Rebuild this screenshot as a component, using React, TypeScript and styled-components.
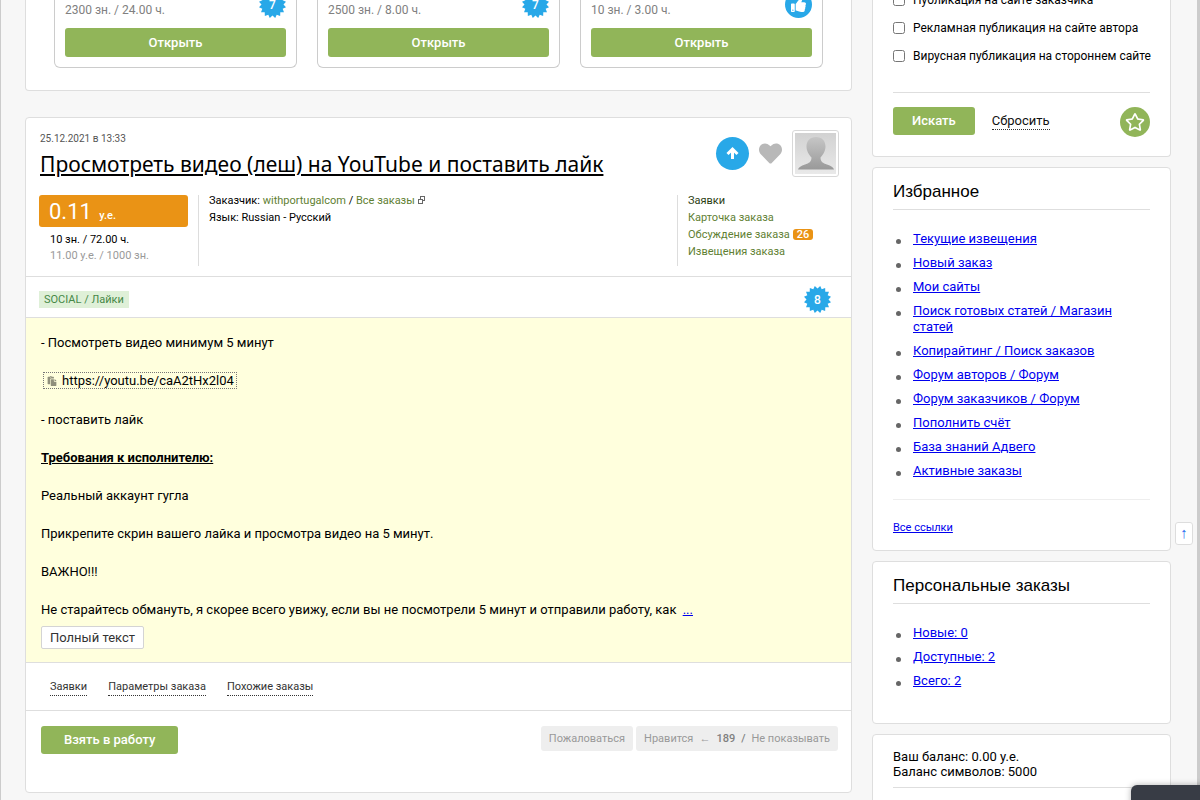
import React from "react";
import styled, { createGlobalStyle, css } from "styled-components";
import { FaHeart, FaPaste, FaRegStar, FaThumbsUp } from "react-icons/fa";

const SANS = `Roboto, "Noto Sans", sans-serif`;
const TITLE = `"Noto Sans", "Open Sans", sans-serif`;
const HEADING = `Arial, "Liberation Sans", sans-serif`;
const GREEN = "#91b559";
const BLUE = "#28a8e8";
const LINE = "#dedede";

const GlobalStyle = createGlobalStyle`
  *, *::before, *::after { box-sizing: border-box; }
  body { margin: 0; background: #f7f7f7; color: #000; font: 12px/16px ${SANS}; overflow: hidden; }
  button { font: inherit; cursor: pointer; }
  h1, h2, p, ul { margin: 0; padding: 0; }
  ul { list-style: none; }
`;

const Page = styled.div`
  display: flex;
  height: 100vh;
  overflow: hidden;
  padding: 0 26px 0 24px;
  border-left: 1px solid #ccc;
  border-right: 3px solid #ccc;
`;
const Columns = styled.div`
  flex: 1;
  min-width: 0;
  display: flex;
  align-items: flex-start;
  gap: 20px;
  margin-top: -14px;
`;
const Main = styled.main`
  flex: 1;
  min-width: 0;
  display: flex;
  flex-direction: column;
  gap: 26px;
`;
const Side = styled.aside`
  width: 299px;
  flex-shrink: 0;
  display: flex;
  flex-direction: column;
  gap: 10px;
`;
const Panel = styled.section`
  background: #fff;
  border: 1px solid ${LINE};
  border-radius: 4px;
`;

const Offers = styled(Panel)`
  display: grid;
  grid-template-columns: repeat(3, 1fr);
  gap: 20px;
  padding: 0 28px 22px;
  border-top: 0;
`;
const Offer = styled.article`
  display: flex;
  flex-direction: column;
  gap: 10px;
  padding: 0 10px 10px;
  border: 1px solid #ccc;
  border-top: 0;
  border-radius: 0 0 6px 6px;
`;
const OfferHead = styled.div`
  display: flex;
  align-items: flex-end;
  justify-content: space-between;
  height: 32px;
`;
const OfferTitle = styled.a`
  display: block;
  margin-bottom: 1px;
  color: #6a8c33;
  font-size: 13px;
  text-decoration: none;
`;
const OfferMeta = styled.div`
  color: #808080;
`;
const GreenButton = styled.button<{ $size?: "wide" | "large" }>`
  height: ${(p) => (p.$size === "wide" ? 29 : 28)}px;
  padding: 0 ${(p) => (p.$size === "large" ? 23 : 19)}px;
  border: 0;
  border-radius: 3px;
  background: ${GREEN};
  color: #fff;
  font-size: 13px;
  font-weight: 500;
  white-space: nowrap;
`;
const BadgeBox = styled.span<{ $round?: boolean }>`
  position: relative;
  display: flex;
  align-items: center;
  justify-content: center;
  width: 27px;
  height: 27px;
  border-radius: 50%;
  background: ${(p) => (p.$round ? BLUE : "transparent")};
  color: #fff;
  font-size: 12px;
  svg.star { position: absolute; left: 0; top: 0; }
  b { position: relative; font-weight: 500; }
`;

const starPoints = Array.from({ length: 32 }, (_, i) => {
  const r = i % 2 ? 11 : 13.8;
  const a = (Math.PI * (i + 1)) / 16;
  return `${(13.5 + r * Math.sin(a)).toFixed(2)},${(13.5 - r * Math.cos(a)).toFixed(2)}`;
}).join(" ");

const StarBadge = ({ value }: { value: number }) => (
  <BadgeBox>
    <svg className="star" width="27" height="27" viewBox="0 0 27 27" aria-hidden="true">
      <polygon points={starPoints} fill={BLUE} />
    </svg>
    <b>{value}</b>
  </BadgeBox>
);

const OrderHead = styled.header`
  display: flex;
  align-items: flex-start;
  justify-content: space-between;
  padding: 12px 12px 0 14px;
`;
const OrderDate = styled.time`
  display: block;
  color: #555;
  font-size: 10px;
  line-height: 18px;
`;
const OrderTitle = styled.h1`
  font: 400 21px/32px ${TITLE};
  a { color: #000; text-underline-offset: 2px; text-decoration-thickness: 2px; }
`;
const HeadTools = styled.div`
  display: flex;
  align-items: center;
  gap: 10px;
`;
const RoundButton = styled.button<{ $size: number; $color: string }>`
  display: flex;
  align-items: center;
  justify-content: center;
  width: ${(p) => p.$size}px;
  height: ${(p) => p.$size}px;
  padding: 0;
  border: 0;
  border-radius: 50%;
  background: ${(p) => p.$color};
  color: #fff;
`;
const PlainIcon = styled.button`
  display: flex;
  padding: 0;
  border: 0;
  background: none;
  color: #b8b8b8;
`;
const Avatar = styled.a`
  display: flex;
  width: 47px;
  height: 47px;
  padding: 2px;
  border: 1px solid #d8d8d8;
  border-radius: 3px;
  background: #fff;
`;
const Details = styled.div`
  display: flex;
  gap: 10px;
  padding: 15px 12px 10px 13px;
  border-bottom: 1px solid ${LINE};
`;
const PriceCol = styled.div`
  width: 149px;
`;
const Price = styled.div`
  height: 32px;
  margin-bottom: 5px;
  padding: 0 10px;
  border-radius: 3px;
  background: #ea9315;
  color: #fff;
  font-size: 22px;
  line-height: 34px;
  small { margin-left: 2px; font-size: 11px; font-weight: 500; }
`;
const PriceNote = styled.div<{ $muted?: boolean }>`
  padding-left: 11px;
  font-size: 11px;
  color: ${(p) => (p.$muted ? "#999" : "#000")};
`;
const InfoCol = styled.div<{ $width?: number }>`
  ${(p) => (p.$width ? css`width: ${p.$width}px;` : css`flex: 1;`)}
  height: 71px;
  padding-left: 10px;
  border-left: 1px solid #ddd;
  font-size: 11px;
  line-height: 16px;
`;
const InfoList = styled.div`
  display: grid;
  gap: 1px;
  margin-top: -2px;
`;
const InfoLink = styled.a<{ $current?: boolean }>`
  color: ${(p) => (p.$current ? "#2b3d12" : "#5f7f33")};
  text-decoration: none;
`;
const Count = styled.span`
  display: inline-block;
  margin-left: 3px;
  padding: 0 4px;
  border-radius: 3px;
  background: #ea9315;
  color: #fff;
  font-size: 11px;
  line-height: 11px;
  font-weight: 500;
`;
const TagRow = styled.div`
  display: flex;
  align-items: center;
  justify-content: space-between;
  height: 41px;
  padding: 5px 20px 0 13px;
  border-bottom: 1px solid ${LINE};
`;
const Tag = styled.a`
  padding: 0 5px;
  background: #dff0d8;
  color: #468847;
  font-size: 11px;
  line-height: 17px;
  text-decoration: none;
`;
const Brief = styled.div`
  display: flex;
  flex-direction: column;
  align-items: flex-start;
  gap: 20px;
  padding: 16px 15px 13px;
  background: #ffffdd;
  border-bottom: 1px solid ${LINE};
  font-size: 13px;
  line-height: 18px;
`;
const MoreLink = styled.a`
  margin-left: 3px;
  color: #0000ee;
`;
const CopyLink = styled.a`
  display: flex;
  align-items: center;
  gap: 5px;
  height: 17px;
  margin: 0 2px 2px;
  padding: 0 2px 0 3px;
  border: 1px dotted #777;
  color: #000;
  text-decoration: none;
  svg { color: #8f8f7c; }
`;
const LastLine = styled.div`
  display: flex;
  flex-direction: column;
  align-items: flex-start;
  gap: 7px;
`;
const WhiteButton = styled.button`
  height: 23px;
  padding: 0 8px;
  border: 1px solid #d4d4d4;
  border-radius: 2px;
  background: #fff;
  color: #333;
`;
const TabRow = styled.nav`
  display: flex;
  align-items: center;
  gap: 21px;
  height: 48px;
  padding: 2px 24px 0;
  border-bottom: 1px solid ${LINE};
`;
const DottedButton = styled.button<{ $large?: boolean }>`
  margin: ${(p) => (p.$large ? 6 : 0)}px 0 0;
  padding: 0;
  border: 0;
  border-bottom: 1px dotted #333;
  background: none;
  color: ${(p) => (p.$large ? "#111" : "#333")};
  font-size: ${(p) => (p.$large ? 13 : 11)}px;
  line-height: 16px;
`;
const ActionRow = styled.div`
  display: flex;
  align-items: flex-start;
  justify-content: space-between;
  padding: 15px 13px 38px 15px;
`;
const GreyGroup = styled.div`
  display: flex;
  gap: 3px;
`;
const GreyBox = styled.div`
  display: flex;
  align-items: center;
  gap: 6px;
  height: 25px;
  padding: 0 8px;
  border-radius: 3px;
  background: #eee;
  color: #999;
  font-size: 11px;
  b { color: #808080; font-weight: 500; }
  button { padding: 0; border: 0; background: none; color: inherit; }
`;

const Filter = styled(Panel)`
  padding: 0 20px 19px;
  border-top: 0;
`;
const CheckRow = styled.label`
  display: flex;
  align-items: center;
  gap: 8px;
  height: 28px;
  white-space: nowrap;
  input { width: 12px; height: 12px; margin: 0; }
`;
const FilterActions = styled.div`
  display: flex;
  align-items: flex-start;
  gap: 17px;
  margin-top: 22px;
  padding-top: 14px;
  border-top: 1px solid ${LINE};
  > :last-child { margin-left: auto; }
`;
const SidePanel = styled(Panel)`
  padding: 11px 20px 14px;
`;
const SideTitle = styled.h2`
  padding-bottom: 4px;
  border-bottom: 1px solid ${LINE};
  font: 400 17px/26px ${HEADING};
`;
const LinkList = styled.ul`
  display: flex;
  flex-direction: column;
  gap: 8px;
  padding: 21px 30px 20px 0;
  font-size: 13px;
  li { position: relative; padding-left: 20px; }
  li::before {
    content: "";
    position: absolute;
    left: 3px;
    top: 8px;
    width: 5px;
    height: 5px;
    border-radius: 50%;
    background: #666;
  }
  a { color: #0000ee; }
`;
const AllLinks = styled.div`
  padding-top: 20px;
  border-top: 1px solid #eee;
  font-size: 11px;
  a { color: #0000ee; }
`;
const Balance = styled.div`
  padding: 3px 0 8px;
  margin-bottom: 20px;
  border-bottom: 1px solid ${LINE};
  font-size: 13px;
  line-height: 15px;
`;
const ToTop = styled.a`
  position: fixed;
  right: 7px;
  top: 522px;
  width: 18px;
  height: 23px;
  border: 1px solid #ddd;
  border-radius: 3px;
  background: #fff;
  color: #2a6cf0;
  font: 15px/20px ${HEADING};
  text-align: center;
  text-decoration: none;
`;
const ChatTab = styled.button`
  position: fixed;
  right: -10px;
  bottom: -25px;
  width: 79px;
  height: 40px;
  padding: 10px 18px 0;
  border: 0;
  border-radius: 6px;
  background: #383c45;
  color: #fff;
  text-align: left;
  box-shadow: 0 0 6px rgba(0, 0, 0, 0.3);
`;

const offers = [
  { title: "Новая тема про уход", meta: "2300 зн. / 24.00 ч.", badge: 7 },
  { title: "Новая тема про уход", meta: "2500 зн. / 8.00 ч.", badge: 7 },
  { title: "Новая тема про уход", meta: "10 зн. / 3.00 ч.", badge: 0 },
];
const filters = [
  "Публикация на сайте заказчика",
  "Рекламная публикация на сайте автора",
  "Вирусная публикация на стороннем сайте",
];
const favourites = [
  "Текущие извещения",
  "Новый заказ",
  "Мои сайты",
  "Поиск готовых статей / Магазин статей",
  "Копирайтинг / Поиск заказов",
  "Форум авторов / Форум",
  "Форум заказчиков / Форум",
  "Пополнить счёт",
  "База знаний Адвего",
  "Активные заказы",
];
const personal = ["Новые: 0", "Доступные: 2", "Всего: 2"];

const Links = ({ items }: { items: string[] }) => (
  <LinkList>
    {items.map((t) => (
      <li key={t}>
        <a href="#">{t}</a>
      </li>
    ))}
  </LinkList>
);

const PersonIcon = () => (
  <svg width="41" height="41" viewBox="0 0 41 41" aria-hidden="true">
    <defs>
      <linearGradient id="bg" x1="0" y1="0" x2="0" y2="1">
        <stop offset="0" stopColor="#d2d2d2" />
        <stop offset="1" stopColor="#e9e9e9" />
      </linearGradient>
      <linearGradient id="fg" x1="0" y1="0" x2="0" y2="1">
        <stop offset="0" stopColor="#c6c6c6" />
        <stop offset="1" stopColor="#999" />
      </linearGradient>
    </defs>
    <rect width="41" height="41" fill="url(#bg)" />
    <path
      d="M21 4C27 4 30.500 8 30.500 13.500C30.500 18 28 22 25.500 24.500C25.500 29 28 30 32 31.500C36 33 38.500 34 39 36.500H3C3.500 34 6 33 10 31.500C14 30 16.500 29 16.500 24.500C14 22 11.500 18 11.500 13.500C11.500 8 15 4 21 4Z"
      fill="url(#fg)"
    />
  </svg>
);

const ArrowIcon = () => (
  <svg width="13" height="13" viewBox="0 0 13 13" fill="none" stroke="#fff" strokeWidth="3" aria-hidden="true">
    <path d="M6.500 12V2.500M1.500 7L6.500 2.200L11.500 7" />
  </svg>
);

const WindowIcon = () => (
  <svg width="7" height="8" viewBox="0 0 7 8" fill="#fff" stroke="#666" aria-hidden="true">
    <rect x="2.500" y="0.500" width="4" height="4" />
    <rect x="0.500" y="3.500" width="4" height="4" />
  </svg>
);

export default function App() {
  return (
    <>
      <GlobalStyle />
      <Page>
        <Columns>
          <Main>
            <Offers>
              {offers.map((o, i) => (
                <Offer key={i}>
                  <OfferHead>
                    <div>
                      <OfferTitle href="#">{o.title}</OfferTitle>
                      <OfferMeta>{o.meta}</OfferMeta>
                    </div>
                    {o.badge ? (
                      <StarBadge value={o.badge} />
                    ) : (
                      <BadgeBox $round>
                        <FaThumbsUp size={15} />
                      </BadgeBox>
                    )}
                  </OfferHead>
                  <GreenButton $size="wide">Открыть</GreenButton>
                </Offer>
              ))}
            </Offers>

            <Panel>
              <OrderHead>
                <div>
                  <OrderDate>25.12.2021 в 13:33</OrderDate>
                  <OrderTitle>
                    <a href="#">Просмотреть видео (леш) на YouTube и поставить лайк</a>
                  </OrderTitle>
                </div>
                <HeadTools>
                  <RoundButton $size={33} $color={BLUE} aria-label="Поднять">
                    <ArrowIcon />
                  </RoundButton>
                  <PlainIcon aria-label="В избранное">
                    <FaHeart size={23} />
                  </PlainIcon>
                  <Avatar href="#" aria-label="Профиль заказчика">
                    <PersonIcon />
                  </Avatar>
                </HeadTools>
              </OrderHead>
              <Details>
                <PriceCol>
                  <Price>
                    0.11 <small>у.е.</small>
                  </Price>
                  <PriceNote>10 зн. / 72.00 ч.</PriceNote>
                  <PriceNote $muted>11.00 у.е. / 1000 зн.</PriceNote>
                </PriceCol>
                <InfoCol>
                  <InfoList>
                    <div>
                      Заказчик: <InfoLink href="#">withportugalcom</InfoLink> /{" "}
                      <InfoLink href="#">Все заказы</InfoLink> <WindowIcon />
                    </div>
                    <div>Язык: Russian - Русский</div>
                  </InfoList>
                </InfoCol>
                <InfoCol $width={162}>
                  <InfoList>
                    <div>
                      <InfoLink href="#" $current>Заявки</InfoLink>
                    </div>
                    <div>
                      <InfoLink href="#">Карточка заказа</InfoLink>
                    </div>
                    <div>
                      <InfoLink href="#">Обсуждение заказа</InfoLink>
                      <Count>26</Count>
                    </div>
                    <div>
                      <InfoLink href="#">Извещения заказа</InfoLink>
                    </div>
                  </InfoList>
                </InfoCol>
              </Details>
              <TagRow>
                <Tag href="#">SOCIAL / Лайки</Tag>
                <StarBadge value={8} />
              </TagRow>
              <Brief>
                <p>- Посмотреть видео минимум 5 минут</p>
                <CopyLink href="#">
                  <FaPaste size={10} />
                  https://youtu.be/caA2tHx2l04
                </CopyLink>
                <p>- поставить лайк</p>
                <p>
                  <b>
                    <u>Требования к исполнителю:</u>
                  </b>
                </p>
                <p>Реальный аккаунт гугла</p>
                <p>Прикрепите скрин вашего лайка и просмотра видео на 5 минут.</p>
                <p>ВАЖНО!!!</p>
                <LastLine>
                  <p>
                    Не старайтесь обмануть, я скорее всего увижу, если вы не посмотрели 5 минут и отправили
                    работу, как <MoreLink href="#">...</MoreLink>
                  </p>
                  <WhiteButton>Полный текст</WhiteButton>
                </LastLine>
              </Brief>
              <TabRow>
                <DottedButton>Заявки</DottedButton>
                <DottedButton>Параметры заказа</DottedButton>
                <DottedButton>Похожие заказы</DottedButton>
              </TabRow>
              <ActionRow>
                <GreenButton $size="large">Взять в работу</GreenButton>
                <GreyGroup>
                  <GreyBox>
                    <button>Пожаловаться</button>
                  </GreyBox>
                  <GreyBox>
                    <button>Нравится</button>
                    <span>←</span>
                    <b>189</b>
                    <b>/</b>
                    <button>Не показывать</button>
                  </GreyBox>
                </GreyGroup>
              </ActionRow>
            </Panel>
          </Main>

          <Side>
            <Filter>
              {filters.map((f) => (
                <CheckRow key={f}>
                  <input type="checkbox" />
                  {f}
                </CheckRow>
              ))}
              <FilterActions>
                <GreenButton>Искать</GreenButton>
                <DottedButton $large>Сбросить</DottedButton>
                <RoundButton $size={30} $color={GREEN} aria-label="Сохранить фильтр">
                  <FaRegStar size={20} />
                </RoundButton>
              </FilterActions>
            </Filter>
            <SidePanel>
              <SideTitle>Избранное</SideTitle>
              <Links items={favourites} />
              <AllLinks>
                <a href="#">Все ссылки</a>
              </AllLinks>
            </SidePanel>
            <SidePanel>
              <SideTitle>Персональные заказы</SideTitle>
              <Links items={personal} />
            </SidePanel>
            <SidePanel>
              <Balance>
                <div>Ваш баланс: 0.00 у.е.</div>
                <div>Баланс символов: 5000</div>
              </Balance>
            </SidePanel>
          </Side>
        </Columns>
      </Page>
      <ToTop href="#" aria-label="Наверх">↑</ToTop>
      <ChatTab>Связь</ChatTab>
    </>
  );
}
